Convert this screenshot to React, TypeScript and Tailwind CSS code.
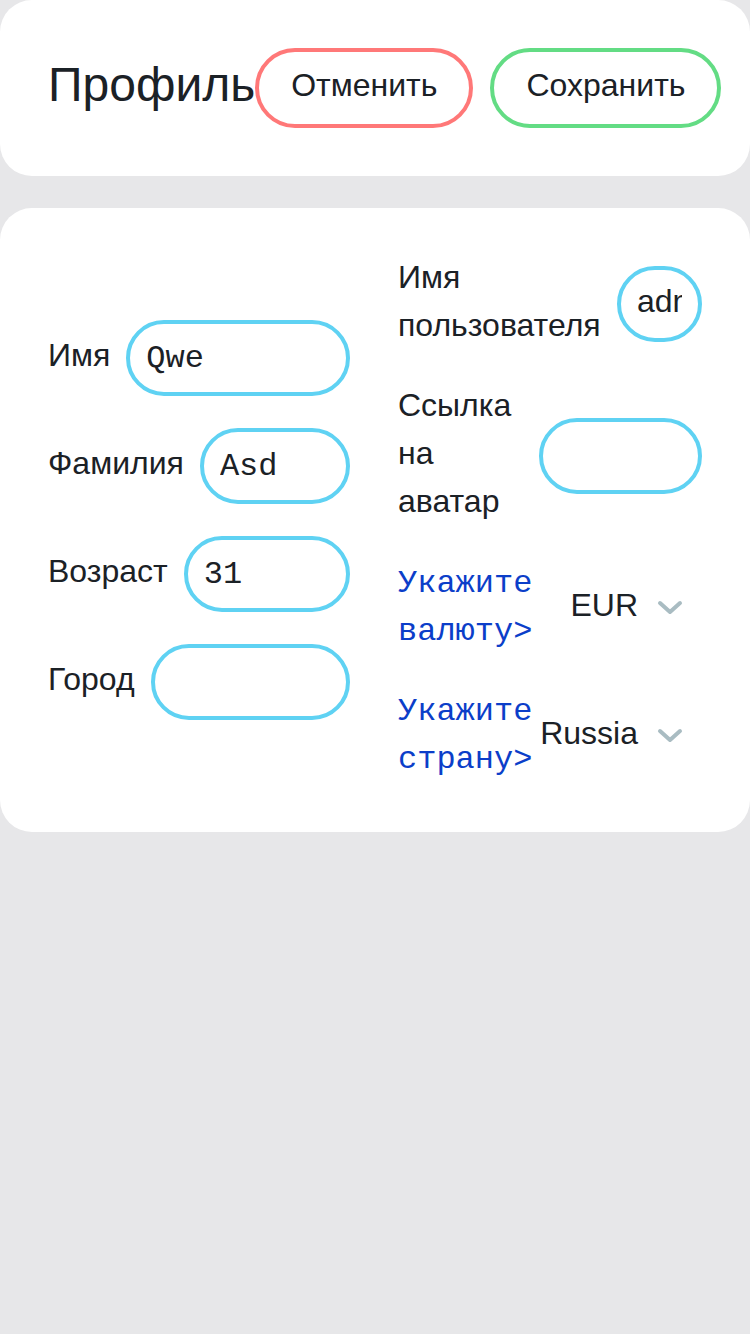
import React from "react";

function Chevron() {
  return (
    <svg width="26" height="16" viewBox="0 0 26 16" className="shrink-0">
      <path d="M3 3 L13 12 L23 3" fill="none" stroke="#a9bcc2" strokeWidth="4" strokeLinecap="round" strokeLinejoin="round" />
    </svg>
  );
}

const inputCls =
  "flex-1 min-w-0 h-[76px] border-4 border-[#5fd2f3] rounded-full px-4 text-[32px] leading-[48px] text-[#1b2126] bg-white outline-none";

function LeftRow({ label, value }: { label: string; value: string }) {
  return (
    <div className="flex items-center gap-4">
      <span className="text-[32px] leading-[48px] whitespace-nowrap -translate-y-[3px]">{label}</span>
      <input readOnly value={value} className={inputCls + " font-['Liberation_Mono',monospace]"} />
    </div>
  );
}

function SelectRow({ label, value }: { label: string; value: string }) {
  return (
    <div className="flex items-center">
      <span className="w-[135px] shrink-0 text-[32px] leading-[48px] text-[#0b3ec9] font-['Liberation_Mono',monospace]">
        {label}
      </span>
      <div className="flex-1 flex items-center justify-end gap-[19px] pr-[19px]">
        <span className="text-[32px] leading-[48px] -translate-y-[3px]">{value}</span>
        <Chevron />
      </div>
    </div>
  );
}

export default function App() {
  return (
    <div className="min-h-[1334px] bg-[#e7e7e9] font-['Liberation_Sans',Arial,sans-serif] text-[#1b2126]">
      <div className="bg-white rounded-[32px] h-[176px] flex items-center pl-12 pr-[31px]">
        <h1 className="text-[48px] leading-[56px] whitespace-nowrap -translate-y-[3px]">Профиль</h1>
        <div className="ml-auto flex gap-[17px]">
          <button className="h-[80px] px-8 pb-[6px] border-4 border-[#ff7878] rounded-full text-[32px] leading-[48px] bg-white text-[#1b2126]">
            Отменить
          </button>
          <button className="h-[80px] px-8 pb-[6px] border-4 border-[#63dc84] rounded-full text-[32px] leading-[48px] bg-white text-[#1b2126]">
            Сохранить
          </button>
        </div>
      </div>

      <div className="mt-8 bg-white rounded-[32px] p-12 grid grid-cols-[302px_304px] gap-x-[48px] items-center">
        <div className="flex flex-col gap-8">
          <LeftRow label="Имя" value="Qwe" />
          <LeftRow label="Фамилия" value="Asd" />
          <LeftRow label="Возраст" value="31" />
          <LeftRow label="Город" value="" />
        </div>
        <div className="flex flex-col gap-8">
          <div className="flex items-center gap-4">
            <span className="w-[203px] shrink-0 text-[32px] leading-[48px] -translate-y-[3px]">Имя пользователя</span>
            <input readOnly value="admin" className={inputCls + " pb-[6px] font-['Liberation_Sans',Arial,sans-serif]"} />
          </div>
          <div className="flex items-center gap-4">
            <span className="w-[125px] shrink-0 text-[32px] leading-[48px] -translate-y-[3px]">Ссылка на аватар</span>
            <input readOnly value="" className={inputCls} />
          </div>
          <SelectRow label="Укажите валюту>" value="EUR" />
          <SelectRow label="Укажите страну>" value="Russia" />
        </div>
      </div>
    </div>
  );
}
